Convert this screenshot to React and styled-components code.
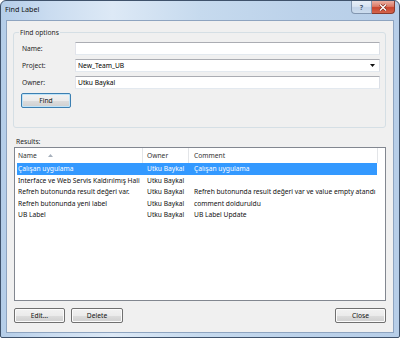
import React from 'react';
import styled, { createGlobalStyle } from 'styled-components';

const GlobalStyle = createGlobalStyle`
  html, body {
    margin: 0;
    padding: 0;
  }
  body {
    width: 400px;
    height: 338px;
    overflow: hidden;
    background: #ffffff;
    font-family: "Noto Sans", "DejaVu Sans", sans-serif;
    font-size: 6.7px;
    color: #1e1e1e;
  }
`;

const Window = styled.div`
  box-sizing: border-box;
  width: 400px;
  height: 338px;
  border: 1px solid #3f526b;
  border-radius: 6px 6px 2px 2px;
  background: linear-gradient(90deg, #b4cde8 0%, #cadcf0 12%, #dde9f6 28%, #c6daee 50%, #bcd2ea 75%, #b7cee8 100%);
  padding: 0 5px 4px 5px;
  display: flex;
  flex-direction: column;
`;

const TitleBar = styled.div`
  height: 19px;
  display: flex;
  justify-content: space-between;
  align-items: flex-start;
`;

const Title = styled.span`
  margin: 4px 0 0 -1px;
  font-size: 7.2px;
  line-height: 9px;
  color: #111;
`;

const Caption = styled.div`
  display: flex;
  margin-right: -1px;
`;

const CaptionButton = styled.div`
  box-sizing: border-box;
  height: 13px;
  width: ${(p) => (p.$close ? '23px' : '21px')};
  display: flex;
  align-items: center;
  justify-content: center;
  border: 1px solid ${(p) => (p.$close ? '#8a3a2c' : '#8296b0')};
  border-top: none;
  border-left: ${(p) => (p.$close ? 'none' : undefined)};
  border-radius: ${(p) => (p.$close ? '0 0 4px 0' : '0 0 0 4px')};
  background: ${(p) =>
    p.$close
      ? 'linear-gradient(#eab0a3 0%, #dc7a66 45%, #c8442c 55%, #d4654c 100%)'
      : 'linear-gradient(#e8eff8 0%, #d8e4f2 45%, #c3d4e9 55%, #ccdcee 100%)'};
  color: ${(p) => (p.$close ? '#fff' : '#44566e')};
  font-size: 7px;
  font-weight: bold;
  line-height: 1;
`;

const Client = styled.div`
  flex: 1;
  display: flex;
  flex-direction: column;
  background: #f0f0f0;
  border: 1px solid #8ea4c0;
  min-height: 0;
`;

const Group = styled.div`
  margin: 11px 7px 0 6px;
  padding: 0 5px 19px 8px;
  border: 1px solid #d5dfe5;
  border-radius: 3px;
  display: flex;
  flex-direction: column;
`;

const Legend = styled.span`
  align-self: flex-start;
  margin: -5px 0 0 -3px;
  padding: 0 1px;
  line-height: 9px;
  background: #f0f0f0;
`;

const FieldRow = styled.div`
  display: flex;
  align-items: center;
  margin-top: ${(p) => (p.$first ? '5px' : '4px')};
`;

const Label = styled.span`
  width: 53px;
  flex-shrink: 0;
`;

const Field = styled.div`
  box-sizing: border-box;
  flex: 1;
  height: 13px;
  display: flex;
  align-items: center;
  justify-content: space-between;
  padding: 0 4px 0 2px;
  background: #ffffff;
  border: 1px solid;
  border-color: #abadb3 #dbdfe6 #e3e9ef #e2e3ea;
  color: #000;
`;

const Button = styled.button`
  box-sizing: border-box;
  width: ${(p) => p.$w}px;
  height: 15px;
  padding: 0;
  font-family: inherit;
  font-size: 6.7px;
  color: #111;
  border: 1px solid ${(p) => (p.$primary ? '#3c7fb1' : '#707070')};
  border-radius: 2px;
  background: linear-gradient(#f2f2f2 0%, #ebebeb 50%, #dddddd 51%, #cfcfcf 100%);
  box-shadow: inset 0 0 0 1px ${(p) => (p.$primary ? '#bfe4f9' : '#fbfbfb')};
`;

const FindButton = styled(Button)`
  margin: 4px 0 0 -1px;
`;

const Section = styled.span`
  margin: 8.5px 0 0 9px;
  line-height: 9px;
`;

const List = styled.div`
  flex: 1;
  margin: 1.5px 7px 0 7px;
  border: 1px solid #828790;
  background: #ffffff;
  display: flex;
  flex-direction: column;
  min-height: 0;
`;

const Header = styled.div`
  height: 15px;
  display: flex;
  flex-shrink: 0;
`;

const HeaderCell = styled.div`
  box-sizing: border-box;
  width: ${(p) => p.$w}px;
  padding-left: ${(p) => p.$pad}px;
  display: flex;
  align-items: center;
  border-right: 1px solid #e3e5e8;
  color: #333;
`;

const Row = styled.div`
  height: 11.5px;
  width: 360px;
  margin-left: 2px;
  display: flex;
  align-items: center;
  background: ${(p) => (p.$selected ? '#3399ff' : 'transparent')};
  color: ${(p) => (p.$selected ? '#ffffff' : '#111')};
`;

const Cell = styled.span`
  box-sizing: border-box;
  width: ${(p) => (p.$w ? `${p.$w}px` : 'auto')};
  flex: ${(p) => (p.$w ? 'none' : 1)};
  padding-left: ${(p) => p.$pad}px;
  white-space: nowrap;
  overflow: ${(p) => (p.$w ? 'hidden' : 'visible')};
`;

const Footer = styled.div`
  display: flex;
  gap: 6px;
  margin: 7px 7px 9px 7px;
`;

const Spacer = styled.div`
  flex: 1;
`;

const rows = [
  { name: 'Çalışan uygulama', owner: 'Utku Baykal', comment: 'Çalışan uygulama', selected: true },
  { name: 'Interface ve Web Servis Kaldırılmış Hali', owner: 'Utku Baykal', comment: '' },
  { name: 'Refreh butonunda result değeri var.', owner: 'Utku Baykal', comment: 'Refreh butonunda result değeri var ve value empty atandı' },
  { name: 'Refreh butonunda yeni label', owner: 'Utku Baykal', comment: 'comment dolduruldu' },
  { name: 'UB Label', owner: 'Utku Baykal', comment: 'UB Label Update' },
];

const App = () => (
  <>
    <GlobalStyle />
    <Window>
      <TitleBar>
        <Title>Find Label</Title>
        <Caption>
          <CaptionButton>?</CaptionButton>
          <CaptionButton $close>
            <svg width="8" height="7" viewBox="0 0 8 7">
              <path d="M1 0.5 L7 6.5 M7 0.5 L1 6.5" stroke="#7a2a1e" strokeWidth="2.6" />
              <path d="M1 0.5 L7 6.5 M7 0.5 L1 6.5" stroke="#ffffff" strokeWidth="1.4" />
            </svg>
          </CaptionButton>
        </Caption>
      </TitleBar>
      <Client>
        <Group>
          <Legend>Find options</Legend>
          <FieldRow $first>
            <Label>Name:</Label>
            <Field />
          </FieldRow>
          <FieldRow>
            <Label>Project:</Label>
            <Field>
              New_Team_UB
              <svg width="5" height="3" viewBox="0 0 5 3">
                <path d="M0 0 H5 L2.5 3 Z" fill="#111" />
              </svg>
            </Field>
          </FieldRow>
          <FieldRow>
            <Label>Owner:</Label>
            <Field>Utku Baykal</Field>
          </FieldRow>
          <FindButton $w={50} $primary>Find</FindButton>
        </Group>
        <Section>Results:</Section>
        <List>
          <Header>
            <HeaderCell $w={128} $pad={3}>
              Name
              <svg width="5" height="3" viewBox="0 0 5 3" style={{ marginLeft: 11 }}>
                <path d="M0 3 H5 L2.5 0 Z" fill="#a7b0bc" />
              </svg>
            </HeaderCell>
            <HeaderCell $w={46} $pad={4}>Owner</HeaderCell>
            <HeaderCell $w={189} $pad={5}>Comment</HeaderCell>
          </Header>
          {rows.map((r) => (
            <Row key={r.name} $selected={r.selected}>
              <Cell $w={126} $pad={1}>{r.name}</Cell>
              <Cell $w={46} $pad={4}>{r.owner}</Cell>
              <Cell $pad={5}>{r.comment}</Cell>
            </Row>
          ))}
        </List>
        <Footer>
          <Button $w={51}>Edit...</Button>
          <Button $w={52}>Delete</Button>
          <Spacer />
          <Button $w={51}>Close</Button>
        </Footer>
      </Client>
    </Window>
  </>
);

export default App;
